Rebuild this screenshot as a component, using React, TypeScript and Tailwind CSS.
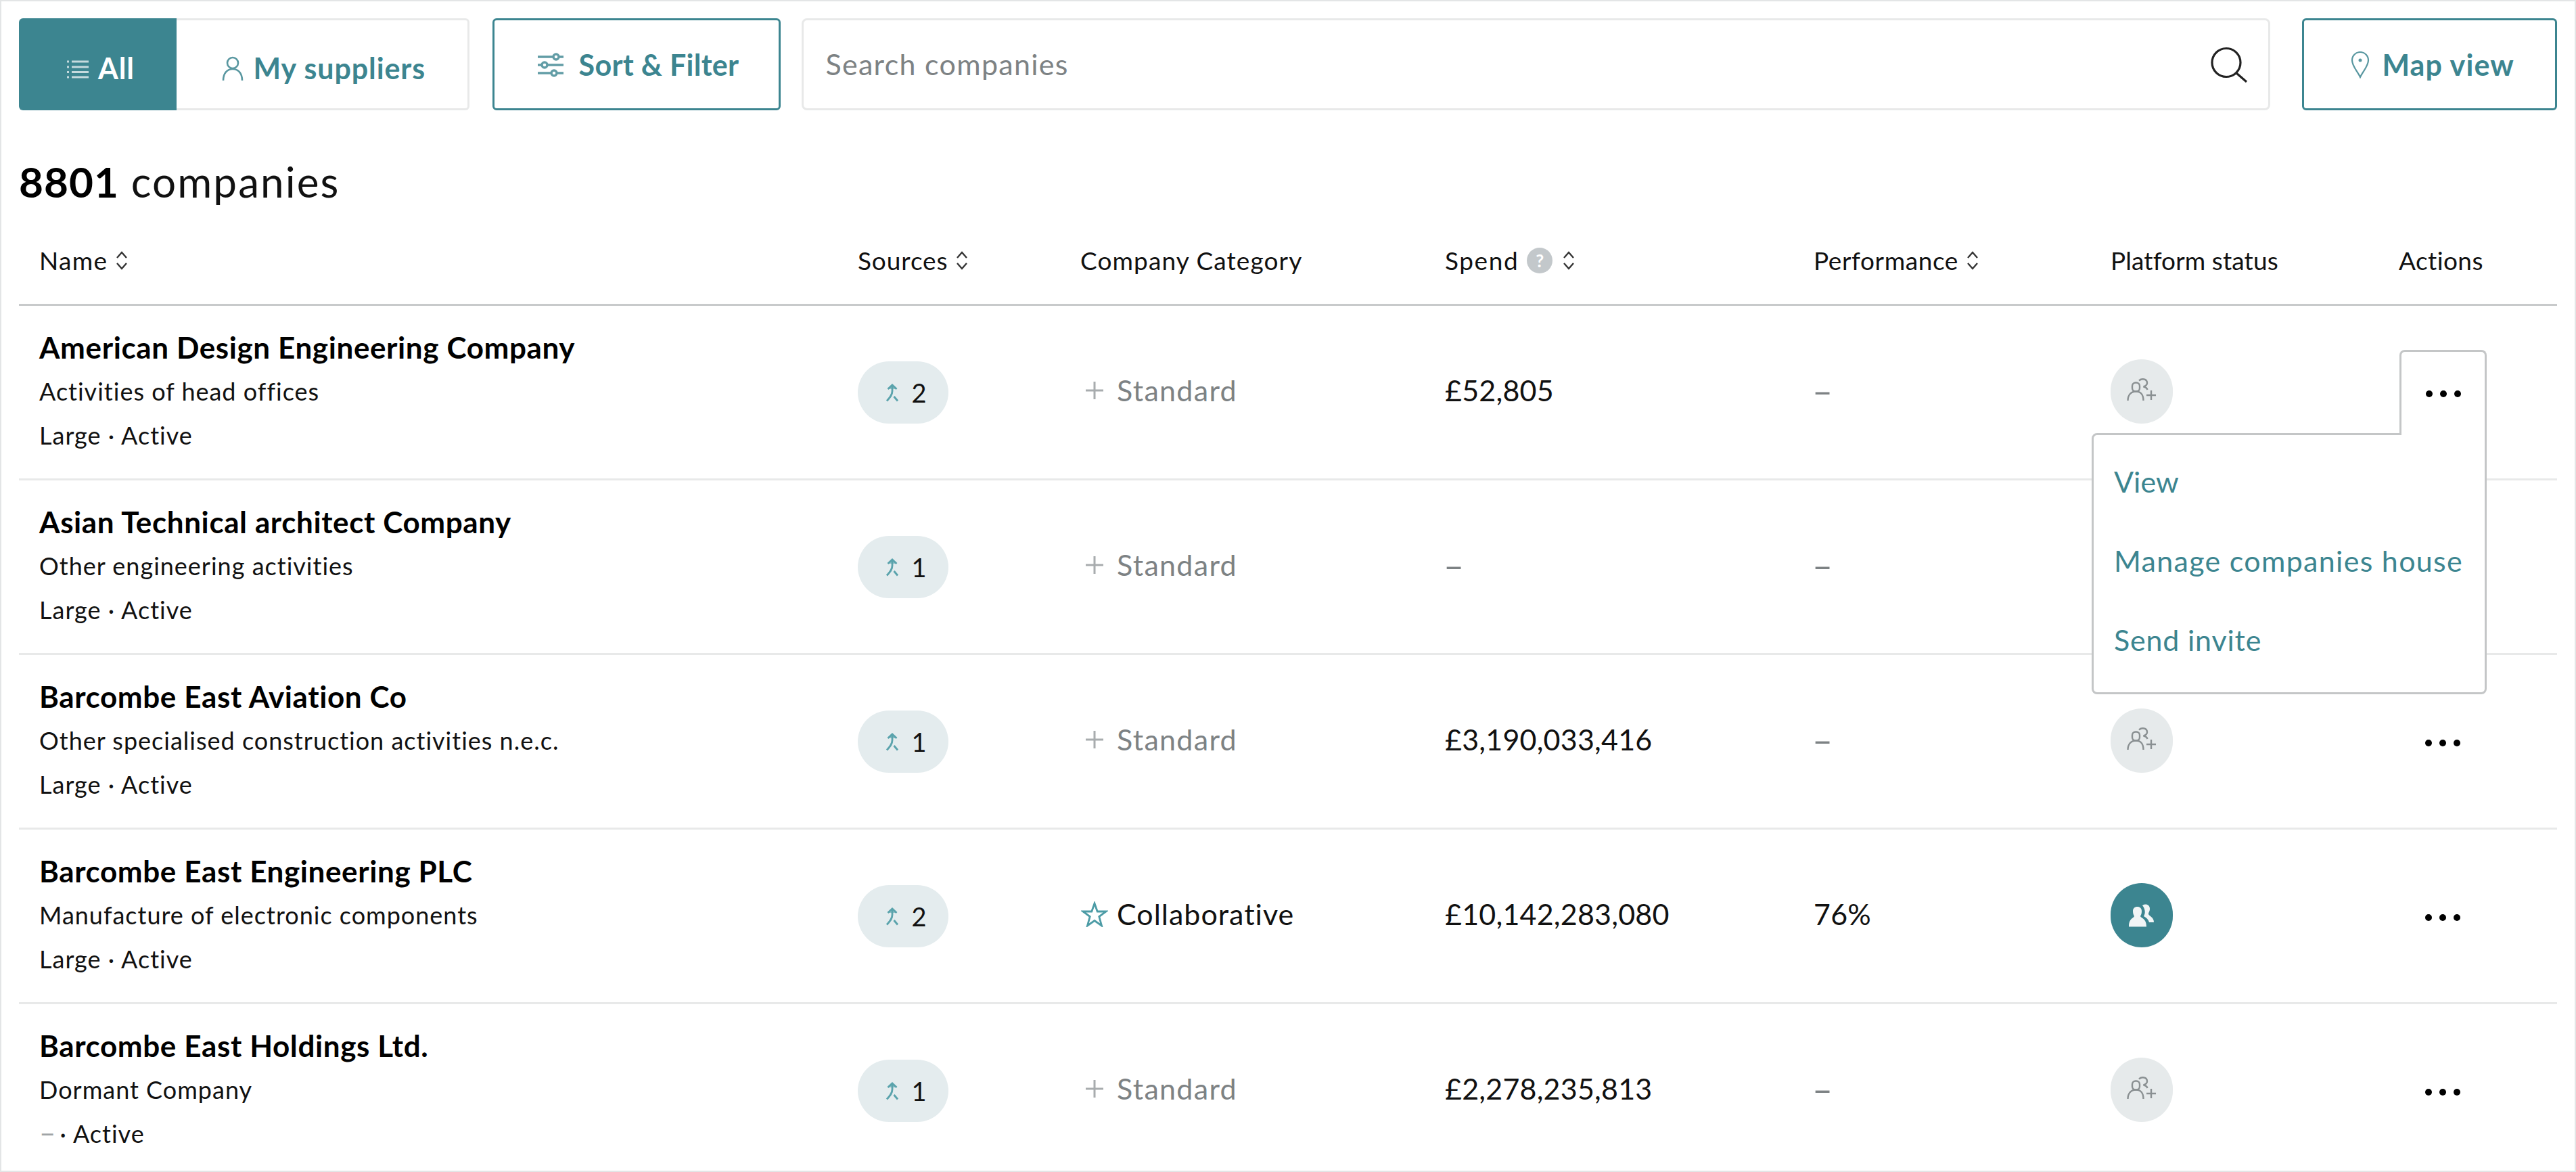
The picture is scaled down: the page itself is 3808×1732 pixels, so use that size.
import React from "react";

function ListIcon() {
  return (
    <svg className="h-[32px] w-[32px]" viewBox="0 0 32 32" fill="none" stroke="currentColor" strokeWidth="3" opacity="0.7">
      <path d="M7 5h25M7 13h25M7 20.500h25M7 28h25M0 5h3M0 13h3M0 20.500h3M0 28h3" />
    </svg>
  );
}

function PersonIcon() {
  return (
    <svg className="h-[37px] w-[32px]" viewBox="0 0 32 37" fill="none" stroke="currentColor" strokeWidth="2.6" opacity="0.85">
      <circle cx="16" cy="10" r="8" />
      <path d="M2 36c0-11 6-17 14-17s14 6 14 17" />
    </svg>
  );
}

function SlidersIcon() {
  return (
    <svg className="h-[36px] w-[38px]" viewBox="0 0 38 36" fill="none" stroke="currentColor" strokeWidth="3.4" opacity="0.8">
      <path d="M0 6h23M31 6h7M0 18h6M14 18h24M0 30h20M28 30h10" />
      <circle cx="27" cy="6" r="4" />
      <circle cx="10" cy="18" r="4" />
      <circle cx="24" cy="30" r="4" />
    </svg>
  );
}

function SearchIcon() {
  return (
    <svg className="h-[54px] w-[56px]" viewBox="0 0 56 54" fill="none" stroke="#222" strokeWidth="3.2">
      <circle cx="23" cy="23.500" r="21" />
      <path d="M38 39l15 13" />
    </svg>
  );
}

function PinIcon() {
  return (
    <svg className="h-[40px] w-[28px]" viewBox="0 0 28 40" fill="none" stroke="currentColor" strokeWidth="2.2" opacity="0.85">
      <path d="M14 38C10 29 2 22 2 13a12 12 0 0 1 24 0c0 9-8 16-12 25z" />
      <circle cx="14" cy="13" r="2.500" fill="currentColor" stroke="none" />
    </svg>
  );
}

function SortIcon() {
  return (
    <svg className="h-[28px] w-[18px]" viewBox="0 0 18 28" fill="none" stroke="#333" strokeWidth="2.400">
      <path d="M2 10l7-8 7 8M2 18l7 8 7-8" />
    </svg>
  );
}

function MergeIcon() {
  return (
    <svg className="h-[28px] w-[20px]" viewBox="0 0 20 28" fill="none" stroke="#5aa3ac" strokeWidth="2.800">
      <path d="M3.500 9l6.500-6 6.500 6" fill="#5aa3ac" fillOpacity="0.6" />
      <path d="M10 3v9c0 6-4 10-8 14.500M12.500 20l5.500 6.500" />
    </svg>
  );
}

function InviteIcon() {
  return (
    <svg className="mb-[6px] h-[34px] w-[44px]" viewBox="0 0 44 34" fill="none" stroke="#8a9092" strokeWidth="2.400">
      <rect x="8" y="6.500" width="11" height="13" rx="5" />
      <path d="M1.500 33c0-8.500 5-13.500 12-13.500S24.500 24.500 24.500 33" />
      <path d="M18 3.500c4-3.500 12-3 12 3.500 0 3-2 4.500-5.500 5.500 3 .5 5 1.500 6 4.500M36 18v14M29 25h14" />
    </svg>
  );
}

function ConnectedIcon() {
  return (
    <svg className="h-[34px] w-[38px]" viewBox="0 0 38 34" fill="#f1f5f6">
      <path d="M12.500 4c4 0 6.500 2.500 6.500 6.500S18 16 17 18c1 3 9 3 9 15.500H0C0 21 7 21 8 18c-1-2-2-3.500-2-7.500S8.500 4 12.500 4z" />
      <path d="M20 2c5-3 11-1 11 5 0 4-2 5-2 8 1 3 8 4 8 12h-7c-1-4-4-7-8-9 3-5 2-11-2-16z" />
    </svg>
  );
}

function StarIcon() {
  return (
    <svg className="h-[38px] w-[40px]" viewBox="0 0 40 38" fill="none" stroke="#4d9ca6" strokeWidth="2.800">
      <path d="M20 3l4.200 12H37l-10.200 7.500L30.500 36 20 28.500 9.500 36l3.700-13.500L3 15h12.800z" />
    </svg>
  );
}

function PlusIcon() {
  return (
    <svg className="h-[26px] w-[26px]" viewBox="0 0 26 26" fill="none" stroke="#a8acae" strokeWidth="3">
      <path d="M13 0v26M0 13h26" />
    </svg>
  );
}

const COLS = "grid grid-cols-[1210px_329px_539px_545px_439px_426px_1fr]";

type Row = {
  name: string;
  activity: string;
  size: string;
  sources: number;
  collaborative?: boolean;
  spend: string;
  performance: string;
};

const rows: Row[] = [
  { name: "American Design Engineering Company", activity: "Activities of head offices", size: "Large", sources: 2, spend: "£52,805", performance: "–" },
  { name: "Asian Technical architect Company", activity: "Other engineering activities", size: "Large", sources: 1, spend: "–", performance: "–" },
  { name: "Barcombe East Aviation Co", activity: "Other specialised construction activities n.e.c.", size: "Large", sources: 1, spend: "£3,190,033,416", performance: "–" },
  { name: "Barcombe East Engineering PLC", activity: "Manufacture of electronic components", size: "Large", sources: 2, collaborative: true, spend: "£10,142,283,080", performance: "76%" },
  { name: "Barcombe East Holdings Ltd.", activity: "Dormant Company", size: "–", sources: 1, spend: "£2,278,235,813", performance: "–" },
];

function Value({ text }: { text: string }) {
  return <span className={text === "–" ? "-ml-[2px] text-[52px] text-[#7d8284]" : "tracking-[0.2px] text-[#111]"}>{text}</span>;
}

function Dots() {
  return (
    <div className="flex w-[52px] justify-between">
      <i className="size-[10px] rounded-full bg-black" />
      <i className="size-[10px] rounded-full bg-black" />
      <i className="size-[10px] rounded-full bg-black" />
    </div>
  );
}

function ActionMenu() {
  return (
    <>
      <div className="absolute top-[188px] right-[104px] z-10 flex h-[386px] w-[584px] flex-col gap-[60px] rounded-[8px] rounded-tr-none border-[3px] border-[#c4c6c7] bg-white pt-[40px] pl-[30px] text-[43px] leading-[57px] tracking-[1.3px] text-[#3c8590]">
        <span className="tracking-normal">View</span>
        <span className="whitespace-nowrap">Manage companies house</span>
        <span className="tracking-[0.8px]">Send invite</span>
      </div>
      <div className="absolute top-[65px] right-[104px] z-20 flex h-[126px] w-[129px] items-center justify-center rounded-t-[8px] border-[3px] border-b-0 border-[#c4c6c7] bg-white">
        <Dots />
      </div>
    </>
  );
}

function CompanyRow({ row, open }: { row: Row; open: boolean }) {
  return (
    <div className={`${COLS} relative h-[258px] items-start border-b-[3px] border-[#e8e9e9] pl-[30px] text-[43px] leading-[56px] last:border-b-0`}>
      <div className="pt-[31px] text-[#111]">
        <div className="text-[44px] leading-[60px] font-bold tracking-[0.6px] text-black">{row.name}</div>
        <div className="mt-[5px] text-[36px] leading-[60px] tracking-[1px]">{row.activity}</div>
        <div className="mt-[5px] text-[36px] leading-[60px] tracking-[1px]">
          {row.size === "–" ? <span className="mr-[-5px] text-[42px] leading-none text-[#a0a4a6]">–</span> : row.size} · Active
        </div>
      </div>
      <div className="pt-[82px]">
        <div className="flex h-[92px] w-[134px] items-center justify-center gap-[18px] rounded-full bg-[#e4ecee] pl-[9px] text-[38px]">
          <MergeIcon />
          {row.sources}
        </div>
      </div>
      {row.collaborative ? (
        <div className="flex items-center gap-[13px] pt-[97px] pl-px tracking-[1px] text-[#111]">
          <StarIcon />
          Collaborative
        </div>
      ) : (
        <div className="flex items-center gap-[20px] pt-[97px] pl-[8px] tracking-[1.3px] text-[#7d8284]">
          <PlusIcon />
          Standard
        </div>
      )}
      <div className="pt-[97px]"><Value text={row.spend} /></div>
      <div className="pt-[97px]"><Value text={row.performance} /></div>
      <div className="pt-[79px]">
        <div className={`flex h-[95px] w-[92px] items-center justify-center rounded-full ${row.collaborative ? "bg-[#3c8590]" : "bg-[#e6eaeb]"}`}>
          {row.collaborative ? <ConnectedIcon /> : <InviteIcon />}
        </div>
      </div>
      <div className="pt-[125px] pl-[39px]"><Dots /></div>
      {open && <ActionMenu />}
    </div>
  );
}

export default function App() {
  return (
    <div className="h-[1732px] w-[3808px] overflow-hidden border-2 border-[#e3e5e6] bg-white px-[26px] pt-[25px] font-['Lato',sans-serif] text-[#111]">
      <div className="flex h-[136px] text-[43px] font-bold text-[#3c8590]">
        <div className="flex w-[233px] items-center justify-center gap-[14px] rounded-l-[6px] bg-[#3c8590] pt-[13px] pl-[9px] tracking-[0.9px] text-white">
          <ListIcon />
          All
        </div>
        <div className="flex w-[433px] items-center justify-center gap-[15px] rounded-r-[6px] border-[3px] border-l-0 border-[#e8e9e9] pt-[13px] pl-[5px] tracking-[0.9px]">
          <PersonIcon />
          My suppliers
        </div>
        <div className="ml-[34px] flex w-[427px] items-center justify-center gap-[23px] rounded-[6px] border-[3px] border-[#3c8590] pt-[2px] pl-[5px] tracking-[0.3px]">
          <SlidersIcon />
          Sort &amp; Filter
        </div>
        <div className="ml-[31px] flex w-[2172px] items-center justify-between rounded-[8px] border-[3px] border-[#e8e9e9] pt-px pr-[29px] pl-[32px] font-normal tracking-[1.3px] text-[#7d8284]">
          <span>Search companies</span>
          <SearchIcon />
        </div>
        <div className="ml-[47px] flex w-[377px] items-center justify-center gap-[18px] rounded-[6px] border-[3px] border-[#3c8590] pt-[2px] pl-[9px] tracking-[1.1px]">
          <PinIcon />
          Map view
        </div>
      </div>

      <h1 className="mt-[65px] text-[62px] leading-[80px] tracking-[2.1px]">
        <b className="tracking-[1px] text-black">8801</b> companies
      </h1>

      <div className={`${COLS} mt-[20px] h-[124px] border-b-[3px] border-[#c8cacb] pt-[33px] pl-[30px] text-[37px] leading-[48px] tracking-[0.6px] *:flex *:h-[48px] *:items-center *:gap-[12px]`}>
        <div className="tracking-[1.3px]">Name <SortIcon /></div>
        <div className="tracking-[0.9px]">Sources <SortIcon /></div>
        <div className="tracking-[1.1px]">Company Category</div>
        <div className="tracking-[1.6px]">
          Spend
          <span className="flex size-[38px] items-center justify-center rounded-full bg-[#c3c8cb] text-[26px] font-bold tracking-normal text-white">?</span>
          <span className="pl-[3px]"><SortIcon /></span>
        </div>
        <div>Performance <SortIcon /></div>
        <div className="tracking-[0.1px]">Platform status</div>
        <div className="tracking-[0.4px]">Actions</div>
      </div>

      {rows.map((row, i) => (
        <CompanyRow key={row.name} row={row} open={i === 0} />
      ))}
    </div>
  );
}
